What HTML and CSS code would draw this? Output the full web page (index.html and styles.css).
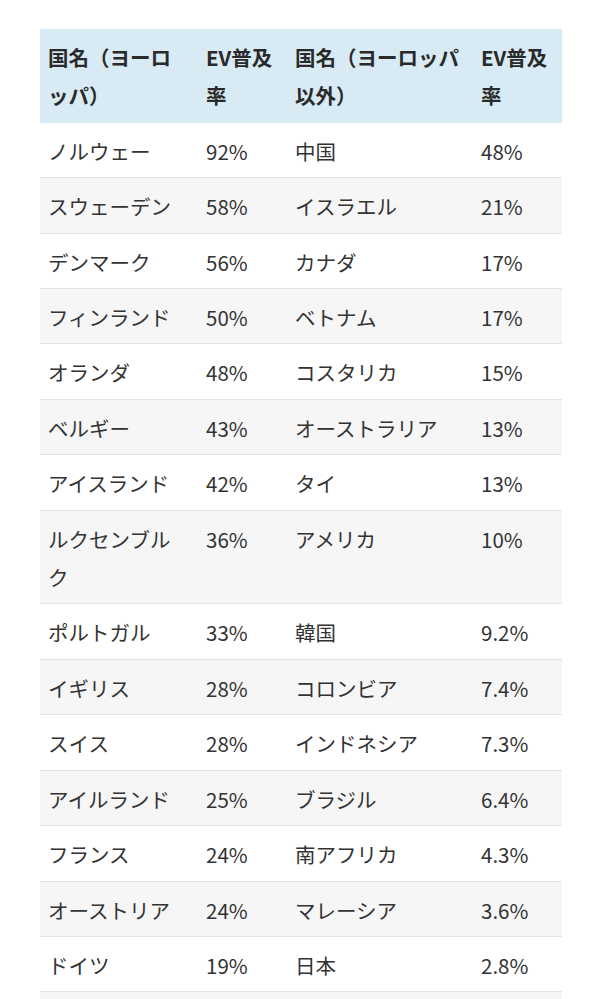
FILE: index.html
```html
<!DOCTYPE html>
<html lang="ja">
<head>
<meta charset="utf-8">
<link rel="stylesheet" href="styles.css">
</head>
<body>
<div class="wrap">
<table class="ev">
<colgroup><col class="c1"><col class="c2"><col class="c3"><col class="c4"></colgroup>
<thead>
<tr><th>国名（ヨーロッパ）</th><th>EV普及率</th><th>国名（ヨーロッパ以外）</th><th>EV普及率</th></tr>
</thead>
<tbody>
<tr><td>ノルウェー</td><td>92%</td><td>中国</td><td>48%</td></tr>
<tr><td>スウェーデン</td><td>58%</td><td>イスラエル</td><td>21%</td></tr>
<tr><td>デンマーク</td><td>56%</td><td>カナダ</td><td>17%</td></tr>
<tr><td>フィンランド</td><td>50%</td><td>ベトナム</td><td>17%</td></tr>
<tr><td>オランダ</td><td>48%</td><td>コスタリカ</td><td>15%</td></tr>
<tr><td>ベルギー</td><td>43%</td><td>オーストラリア</td><td>13%</td></tr>
<tr><td>アイスランド</td><td>42%</td><td>タイ</td><td>13%</td></tr>
<tr><td>ルクセンブルク</td><td>36%</td><td>アメリカ</td><td>10%</td></tr>
<tr><td>ポルトガル</td><td>33%</td><td>韓国</td><td>9.2%</td></tr>
<tr><td>イギリス</td><td>28%</td><td>コロンビア</td><td>7.4%</td></tr>
<tr><td>スイス</td><td>28%</td><td>インドネシア</td><td>7.3%</td></tr>
<tr><td>アイルランド</td><td>25%</td><td>ブラジル</td><td>6.4%</td></tr>
<tr><td>フランス</td><td>24%</td><td>南アフリカ</td><td>4.3%</td></tr>
<tr><td>オーストリア</td><td>24%</td><td>マレーシア</td><td>3.6%</td></tr>
<tr><td>ドイツ</td><td>19%</td><td>日本</td><td>2.8%</td></tr>
<tr><td>&nbsp;</td><td>&nbsp;</td><td>&nbsp;</td><td>&nbsp;</td></tr>
</tbody>
</table>
</div>
</body>
</html>
```
FILE: styles.css
```css
html, body {
  margin: 0;
  padding: 0;
  background: #ffffff;
}
.wrap {
  padding: 29px 41px 0 40px;
}
.ev {
  width: 522px;
  border-collapse: collapse;
  table-layout: fixed;
  font-family: "Noto Sans CJK JP", "Noto Sans", sans-serif;
  font-size: 20.5px;
  line-height: 38.4px;
  color: #333333;
}
.c1 { width: 158px; }
.c2 { width: 89px; }
.c3 { width: 186px; }
.c4 { width: 89px; }
.ev th {
  background: #d8ebf5;
  font-weight: bold;
  text-align: left;
  padding: 9px 8px 8px 8px;
  vertical-align: top;
  color: #2a2a2a;
}
.ev td {
  padding: 9px 8px 7px 8px;
  border-bottom: 1px solid #e2e2e2;
  vertical-align: top;
  font-weight: 400;
}
.ev th:first-child,
.ev td:first-child {
  padding-right: 14px;
}
.ev tbody tr:nth-child(even) td {
  background: #f6f6f6;
}
```
